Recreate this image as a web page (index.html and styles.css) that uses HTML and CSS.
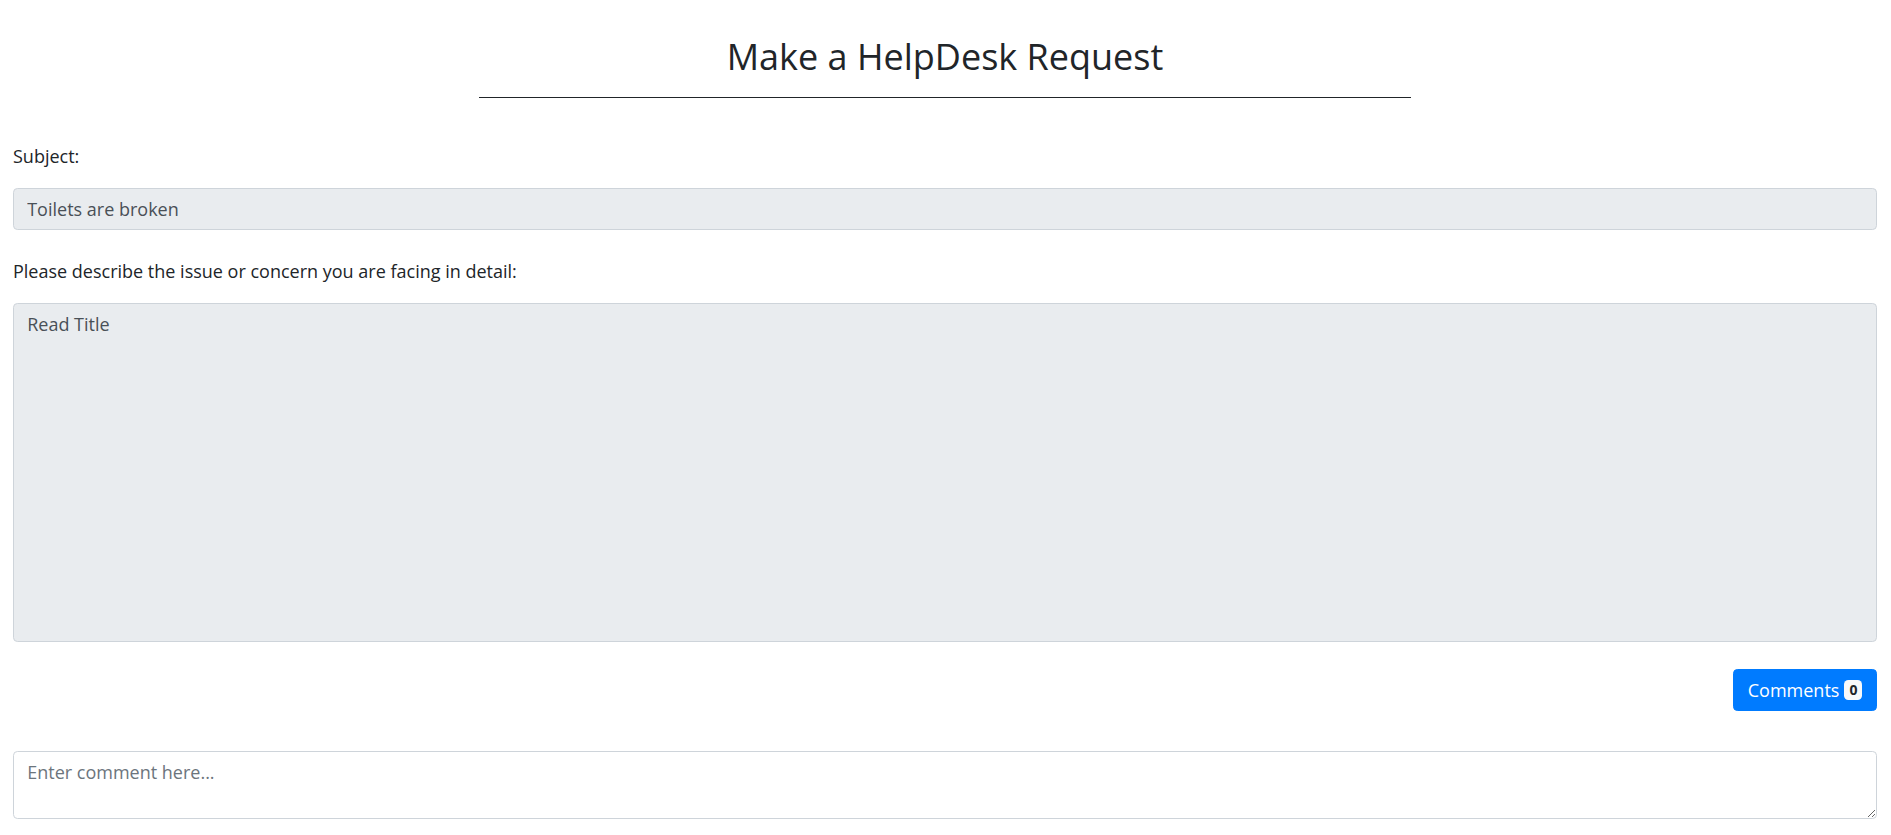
FILE: index.html
```html
<!DOCTYPE html>
<html lang="en">
<head>
<meta charset="utf-8">
<title>Make a HelpDesk Request</title>
<link rel="stylesheet" href="styles.css">
</head>
<body>
<main class="page">
  <header class="page-head">
    <h2 class="title">Make a HelpDesk Request</h2>
    <hr class="rule">
  </header>
  <form class="form">
    <div class="group group-first">
      <label class="label" for="subject">Subject:</label>
      <input class="control" id="subject" type="text" value="Toilets are broken" disabled>
    </div>
    <div class="group">
      <label class="label" for="detail">Please describe the issue or concern you are facing in detail:</label>
      <textarea class="control area-detail" id="detail" disabled>Read Title</textarea>
    </div>
    <div class="actions">
      <button type="button" class="btn">Comments <span class="badge">0</span></button>
    </div>
    <textarea class="control area-comment" rows="2" placeholder="Enter comment here..."></textarea>
  </form>
</main>
</body>
</html>
```

FILE: styles.css
```css
* { box-sizing: border-box; }
html, body { margin: 0; padding: 0; background: #fff; }
body {
  font-family: "Open Sans", "Noto Sans", "Liberation Sans", sans-serif;
  font-size: 18px;
  line-height: 26px;
  color: #212529;
}
.page {
  padding: 36px 14px 0 13px;
}
.page-head {
  display: flex;
  flex-direction: column;
  align-items: center;
}
.title {
  margin: 0;
  font-size: 36px;
  font-weight: 400;
  line-height: 42px;
  color: #212529;
}
.rule {
  width: 50%;
  margin: 19px 0 0;
  border: 0;
  border-top: 1px solid #212529;
  height: 0;
}
.form {
  display: flex;
  flex-direction: column;
}
.group {
  display: flex;
  flex-direction: column;
  margin-top: 28px;
}
.group-first { margin-top: 45px; }
.label {
  display: block;
  margin-bottom: 19px;
  line-height: 26px;
}
.control {
  display: block;
  width: 100%;
  font-family: inherit;
  font-size: 18px;
  line-height: 26.4px;
  padding: 6.6px 13.2px;
  color: #495057;
  background: #fff;
  border: 1px solid #ced4da;
  border-radius: 4.4px;
  margin: 0;
}
.control:disabled {
  background: #e9ecef;
  opacity: 1;
}
input.control { height: 42px; }
.area-detail {
  height: 339px;
  resize: none;
}
.area-comment {
  height: 68px;
  margin-top: 40px;
  resize: vertical;
}
.area-comment::placeholder { color: #6c757d; opacity: 1; }
.actions {
  display: flex;
  justify-content: flex-end;
  margin-top: 27px;
}
.btn {
  font-family: inherit;
  font-size: 18px;
  line-height: 26.4px;
  height: 42px;
  padding: 6.6px 13.6px 6.6px 14px;
  color: #fff;
  background: #007bff;
  border: 1px solid #007bff;
  border-radius: 4.4px;
  display: inline-flex;
  align-items: center;
  gap: 5px;
  cursor: pointer;
}
.badge {
  display: inline-block;
  font-size: 14px;
  font-weight: 700;
  line-height: 1;
  padding: 3px 5px;
  border-radius: 4.4px;
  background: #f8f9fa;
  color: #212529;
}
```
